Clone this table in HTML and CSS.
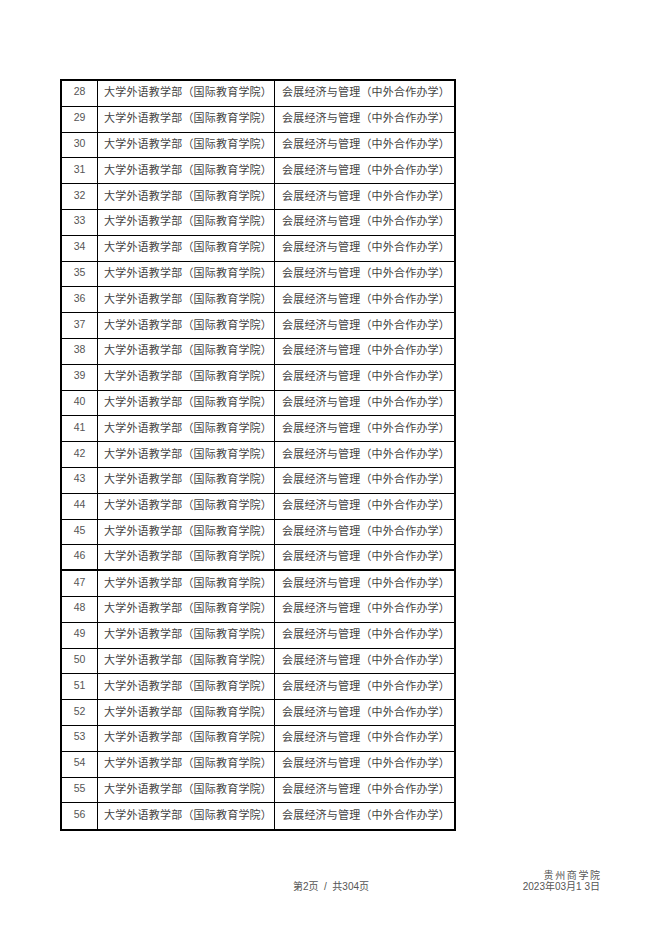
FILE: index.html
```html
<!DOCTYPE html>
<html lang="zh-CN">
<head>
<meta charset="utf-8">
<title>名单</title>
<link rel="stylesheet" href="styles.css">
</head>
<body>
<div class="page">
  <div class="sheet">
    <div class="row"><div class="c num">28</div><div class="c dept">大学外语教学部（国际教育学院）</div><div class="c major">会展经济与管理（中外合作办学）</div></div>
    <div class="row"><div class="c num">29</div><div class="c dept">大学外语教学部（国际教育学院）</div><div class="c major">会展经济与管理（中外合作办学）</div></div>
    <div class="row"><div class="c num">30</div><div class="c dept">大学外语教学部（国际教育学院）</div><div class="c major">会展经济与管理（中外合作办学）</div></div>
    <div class="row"><div class="c num">31</div><div class="c dept">大学外语教学部（国际教育学院）</div><div class="c major">会展经济与管理（中外合作办学）</div></div>
    <div class="row"><div class="c num">32</div><div class="c dept">大学外语教学部（国际教育学院）</div><div class="c major">会展经济与管理（中外合作办学）</div></div>
    <div class="row"><div class="c num">33</div><div class="c dept">大学外语教学部（国际教育学院）</div><div class="c major">会展经济与管理（中外合作办学）</div></div>
    <div class="row"><div class="c num">34</div><div class="c dept">大学外语教学部（国际教育学院）</div><div class="c major">会展经济与管理（中外合作办学）</div></div>
    <div class="row"><div class="c num">35</div><div class="c dept">大学外语教学部（国际教育学院）</div><div class="c major">会展经济与管理（中外合作办学）</div></div>
    <div class="row"><div class="c num">36</div><div class="c dept">大学外语教学部（国际教育学院）</div><div class="c major">会展经济与管理（中外合作办学）</div></div>
    <div class="row"><div class="c num">37</div><div class="c dept">大学外语教学部（国际教育学院）</div><div class="c major">会展经济与管理（中外合作办学）</div></div>
    <div class="row"><div class="c num">38</div><div class="c dept">大学外语教学部（国际教育学院）</div><div class="c major">会展经济与管理（中外合作办学）</div></div>
    <div class="row"><div class="c num">39</div><div class="c dept">大学外语教学部（国际教育学院）</div><div class="c major">会展经济与管理（中外合作办学）</div></div>
    <div class="row"><div class="c num">40</div><div class="c dept">大学外语教学部（国际教育学院）</div><div class="c major">会展经济与管理（中外合作办学）</div></div>
    <div class="row"><div class="c num">41</div><div class="c dept">大学外语教学部（国际教育学院）</div><div class="c major">会展经济与管理（中外合作办学）</div></div>
    <div class="row"><div class="c num">42</div><div class="c dept">大学外语教学部（国际教育学院）</div><div class="c major">会展经济与管理（中外合作办学）</div></div>
    <div class="row"><div class="c num">43</div><div class="c dept">大学外语教学部（国际教育学院）</div><div class="c major">会展经济与管理（中外合作办学）</div></div>
    <div class="row"><div class="c num">44</div><div class="c dept">大学外语教学部（国际教育学院）</div><div class="c major">会展经济与管理（中外合作办学）</div></div>
    <div class="row"><div class="c num">45</div><div class="c dept">大学外语教学部（国际教育学院）</div><div class="c major">会展经济与管理（中外合作办学）</div></div>
    <div class="row break"><div class="c num">46</div><div class="c dept">大学外语教学部（国际教育学院）</div><div class="c major">会展经济与管理（中外合作办学）</div></div>
    <div class="row"><div class="c num">47</div><div class="c dept">大学外语教学部（国际教育学院）</div><div class="c major">会展经济与管理（中外合作办学）</div></div>
    <div class="row"><div class="c num">48</div><div class="c dept">大学外语教学部（国际教育学院）</div><div class="c major">会展经济与管理（中外合作办学）</div></div>
    <div class="row"><div class="c num">49</div><div class="c dept">大学外语教学部（国际教育学院）</div><div class="c major">会展经济与管理（中外合作办学）</div></div>
    <div class="row"><div class="c num">50</div><div class="c dept">大学外语教学部（国际教育学院）</div><div class="c major">会展经济与管理（中外合作办学）</div></div>
    <div class="row"><div class="c num">51</div><div class="c dept">大学外语教学部（国际教育学院）</div><div class="c major">会展经济与管理（中外合作办学）</div></div>
    <div class="row"><div class="c num">52</div><div class="c dept">大学外语教学部（国际教育学院）</div><div class="c major">会展经济与管理（中外合作办学）</div></div>
    <div class="row"><div class="c num">53</div><div class="c dept">大学外语教学部（国际教育学院）</div><div class="c major">会展经济与管理（中外合作办学）</div></div>
    <div class="row"><div class="c num">54</div><div class="c dept">大学外语教学部（国际教育学院）</div><div class="c major">会展经济与管理（中外合作办学）</div></div>
    <div class="row"><div class="c num">55</div><div class="c dept">大学外语教学部（国际教育学院）</div><div class="c major">会展经济与管理（中外合作办学）</div></div>
    <div class="row last"><div class="c num">56</div><div class="c dept">大学外语教学部（国际教育学院）</div><div class="c major">会展经济与管理（中外合作办学）</div></div>
  </div>
  <div class="footer">
    <div class="pager">第2页  /  共304页</div>
    <div class="sign">
      <div class="org">贵州商学院</div>
      <div class="date">2023年03月1 3日</div>
    </div>
  </div>
</div>
</body>
</html>
```
FILE: styles.css
```css
html, body {
  margin: 0;
  padding: 0;
  background: #fff;
}
.page {
  width: 662px;
  height: 936px;
  padding-top: 79px;
  box-sizing: border-box;
  font-family: "Liberation Sans", "Noto Sans CJK SC", sans-serif;
  color: #444;
}
.sheet {
  margin-left: 60px;
  width: 392px;
  border: 2px solid #000;
}
.row {
  display: flex;
  height: 25.8px;
  box-sizing: border-box;
  border-bottom: 1px solid #000;
}
.row.break {
  border-bottom-width: 2px;
}
.row.last {
  border-bottom: none;
}
.c {
  display: flex;
  align-items: center;
  font-size: 11px;
  line-height: 13px;
  padding-bottom: 3px;
  box-sizing: border-box;
  white-space: nowrap;
}
.num {
  width: 36px;
  border-right: 1px solid #000;
  justify-content: center;
  font-size: 10.5px;
  color: #555;
}
.dept {
  width: 177px;
  border-right: 1px solid #000;
  padding-left: 6px;
  letter-spacing: 0.2px;
  font-family: "Noto Sans CJK SC", sans-serif;
}
.major {
  width: 179px;
  padding-left: 7px;
  letter-spacing: 0.2px;
  font-family: "Noto Sans CJK SC", sans-serif;
}
.footer {
  display: grid;
  grid-template-columns: 1fr auto 1fr;
  margin-top: 38px;
  font-size: 10px;
  line-height: 12px;
  color: #555;
}
.pager {
  grid-column: 2;
  align-self: end;
  font-family: "Liberation Sans", "Noto Sans CJK SC", sans-serif;
  white-space: pre;
}
.sign {
  grid-column: 3;
  justify-self: end;
  padding-right: 62px;
  text-align: right;
}
.org {
  letter-spacing: 1.6px;
  margin-right: -1.6px;
  font-family: "Noto Sans CJK SC", sans-serif;
}
.date {
  font-family: "Liberation Sans", "Noto Sans CJK SC", sans-serif;
  white-space: pre;
}
```
